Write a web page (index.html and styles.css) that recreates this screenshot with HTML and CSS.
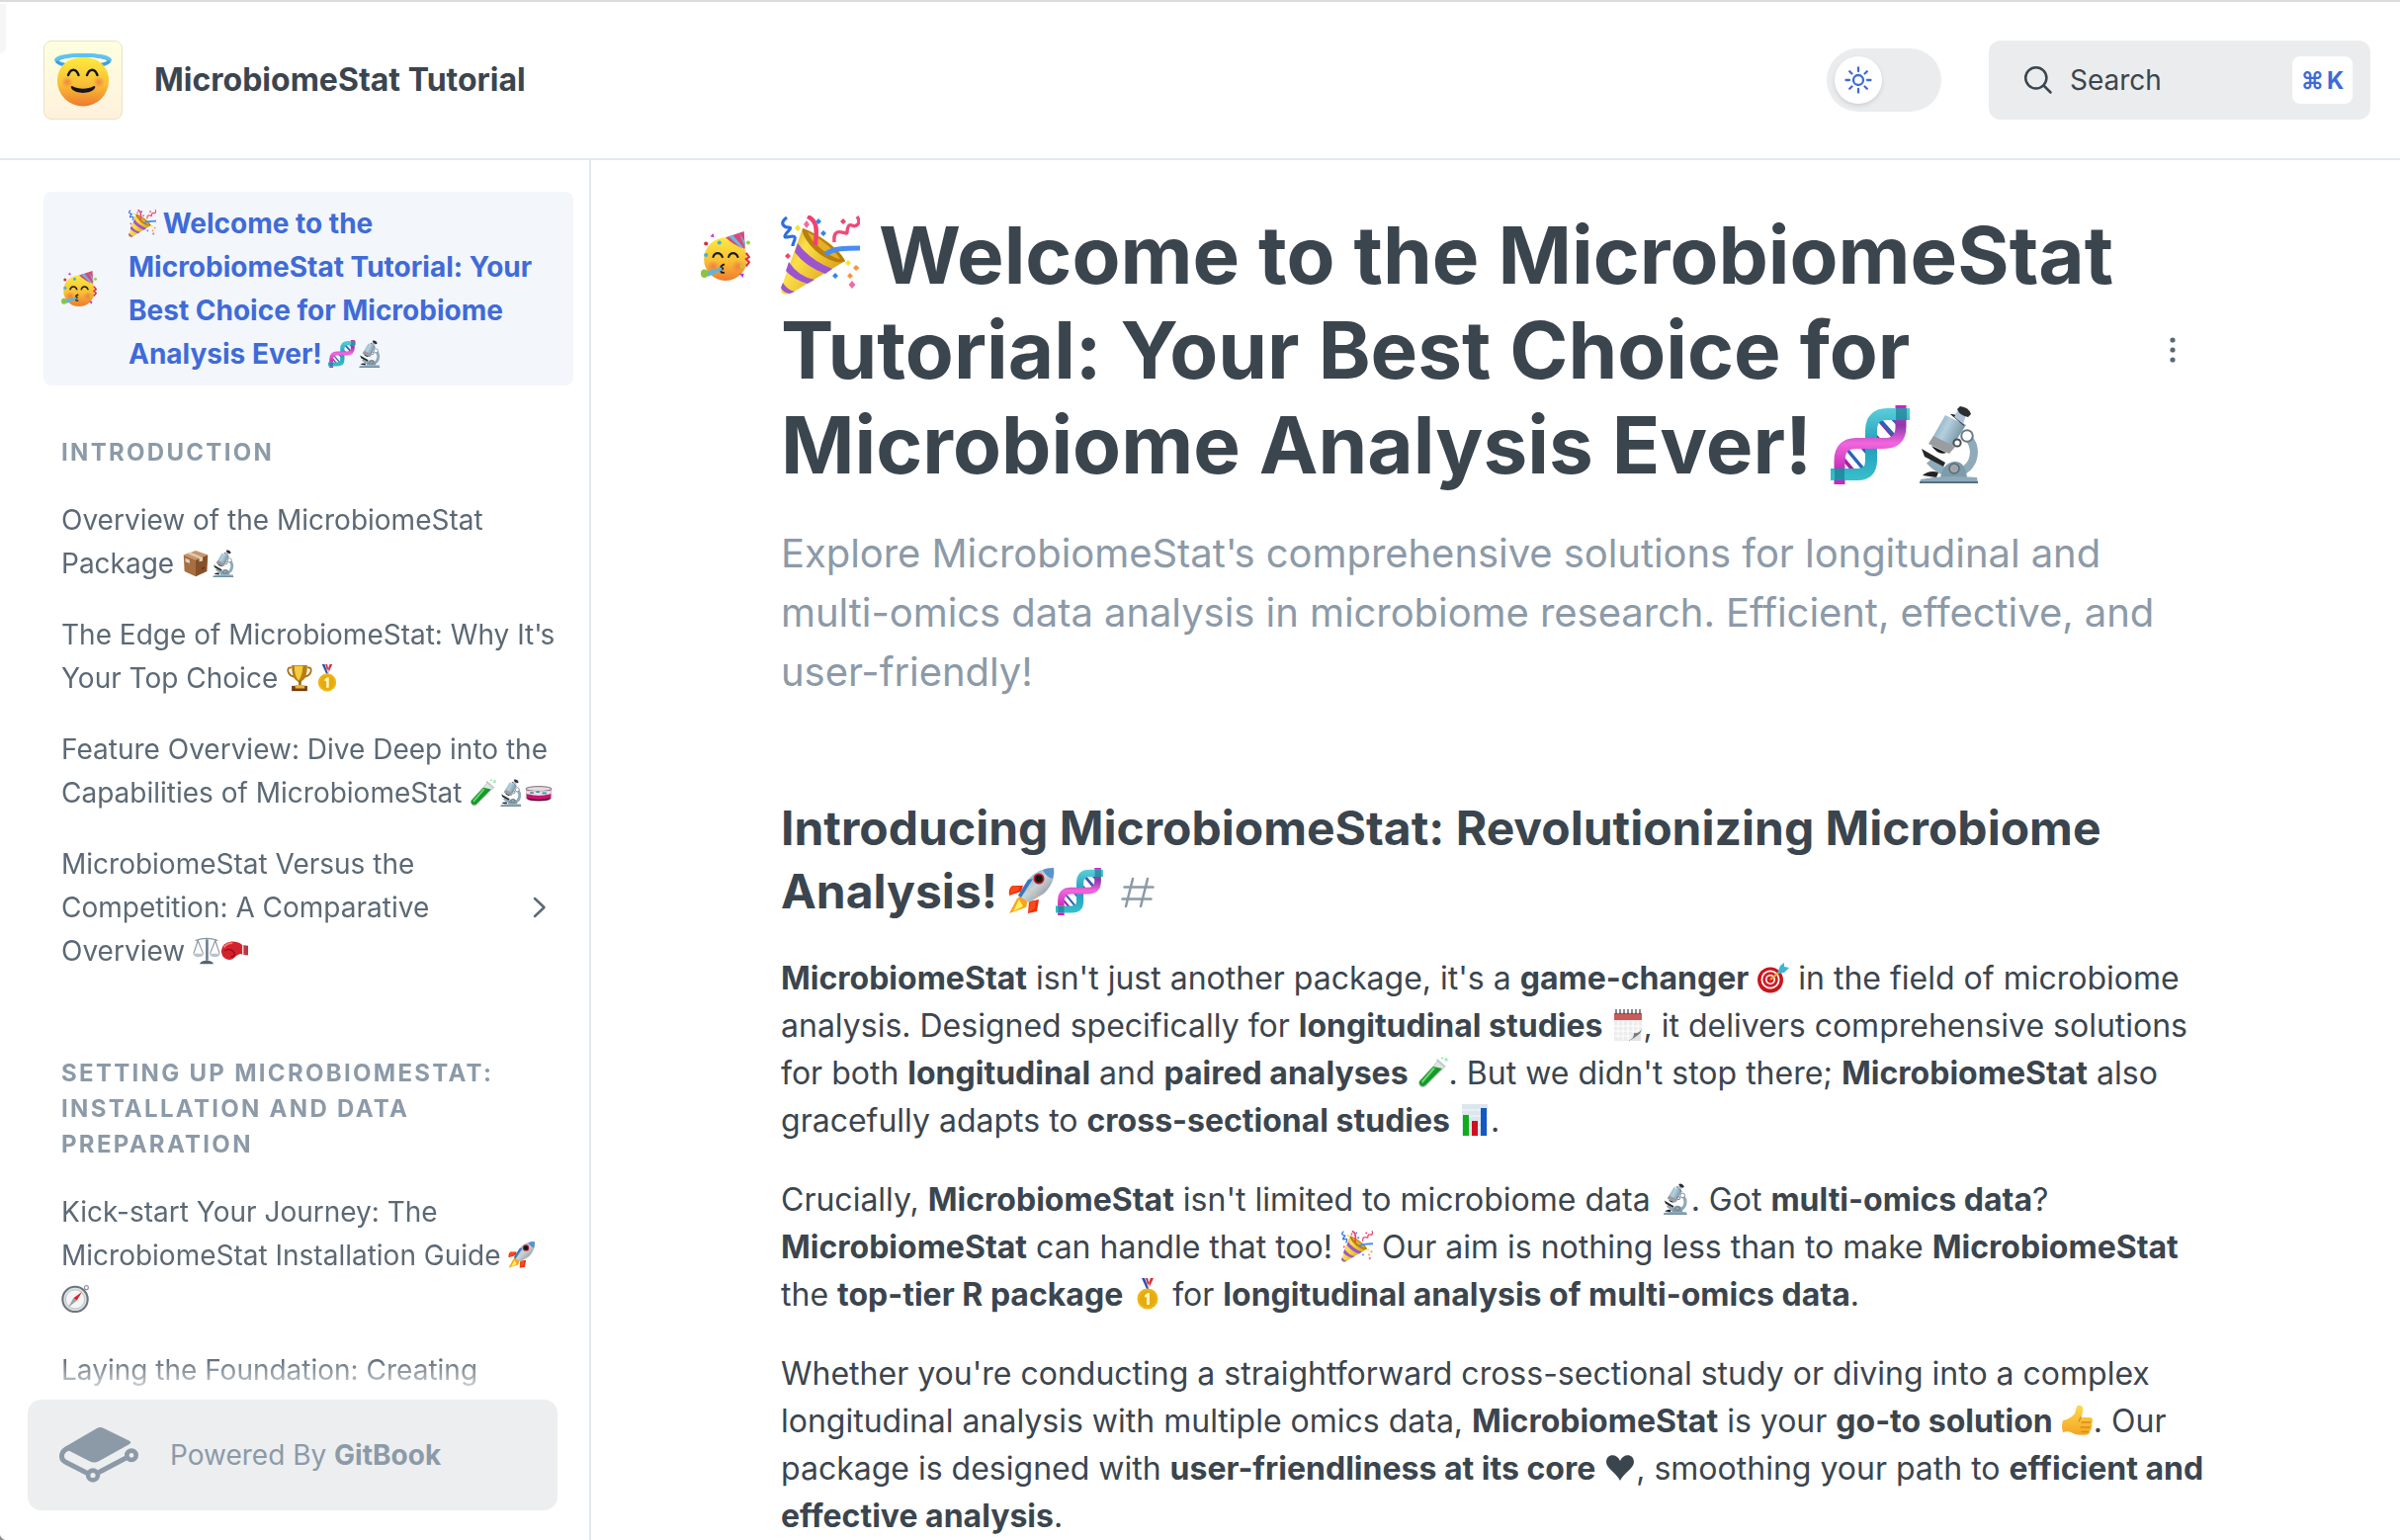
FILE: index.html
```html
<!DOCTYPE html>
<html lang="en">
<head>
<meta charset="utf-8">
<title>MicrobiomeStat Tutorial</title>
<link rel="stylesheet" href="styles.css">
</head>
<body>
<svg class="sprite" width="0" height="0" aria-hidden="true">
  <defs>
    <linearGradient id="face" x1="0" y1="0" x2="0" y2="1"><stop offset="0" stop-color="#fdea3f"/><stop offset=".55" stop-color="#f9bf35"/><stop offset="1" stop-color="#ee7a2e"/></linearGradient>
    <linearGradient id="gold" x1="0" y1="0" x2="1" y2=".6"><stop offset="0" stop-color="#c98f12"/><stop offset=".4" stop-color="#fbe04a"/><stop offset="1" stop-color="#d99a14"/></linearGradient>
    <linearGradient id="steel" x1="0" y1="0" x2="1" y2=".5"><stop offset="0" stop-color="#6d93a8"/><stop offset=".5" stop-color="#b4d0de"/><stop offset="1" stop-color="#6b8899"/></linearGradient>
    <linearGradient id="teal" gradientUnits="userSpaceOnUse" x1="0" y1="0" x2="0" y2="80"><stop offset="0" stop-color="#5fd3dc"/><stop offset=".5" stop-color="#1f9dbb"/><stop offset="1" stop-color="#3cc3cc"/></linearGradient>
    <linearGradient id="magenta" gradientUnits="userSpaceOnUse" x1="0" y1="0" x2="0" y2="80"><stop offset="0" stop-color="#e23bd0"/><stop offset=".25" stop-color="#8d38ad"/><stop offset=".48" stop-color="#f166dd"/><stop offset="1" stop-color="#ad0fa5"/></linearGradient>
    <linearGradient id="hull" x1="0" y1="0" x2="1" y2="1"><stop offset="0" stop-color="#3f87cf"/><stop offset=".5" stop-color="#c9d4dc"/><stop offset="1" stop-color="#6f7478"/></linearGradient>
    <linearGradient id="thumb" x1="0" y1="0" x2="0" y2="1"><stop offset="0" stop-color="#ffd84a"/><stop offset="1" stop-color="#f3a524"/></linearGradient>
    <radialGradient id="blush"><stop offset="0" stop-color="#f0744a" stop-opacity=".8"/><stop offset="1" stop-color="#f0744a" stop-opacity="0"/></radialGradient>
  </defs>

  <symbol id="halo" viewBox="0 0 80 80">
    <ellipse cx="40" cy="20.5" rx="26.5" ry="5.7" fill="none" stroke="#3f9fe4" stroke-width="3.6"/>
    <path d="M40 17c14 0 26 8 26 23.500a26 26 0 0 1-52 0C14 25 26 17 40 17z" fill="url(#face)"/>
    <path d="M12.500 20.500C13.500 13 66.500 13 67.500 20.500" fill="none" stroke="#5bc3f4" stroke-width="3.600"/>
    <circle cx="24" cy="42" r="6" fill="url(#blush)"/><circle cx="56" cy="42" r="6" fill="url(#blush)"/>
    <path d="M25 35c2.500-7 8-7 10.500 0M44 35c2.500-7 8-7 10.500 0" fill="none" stroke="#14151f" stroke-width="2.400" stroke-linecap="round"/>
    <path d="M29 46c6 3.500 16 3.500 22 0 1.500 0 1.500 1 1 2-4 6.500-20 6.500-24 0-.5-1-.5-2 1-2z" fill="#14151f"/>
  </symbol>

  <symbol id="party" viewBox="0 0 48 48">
    <circle cx="24" cy="27" r="21" fill="url(#face)"/>
    <circle cx="12" cy="34" r="6" fill="url(#blush)"/><circle cx="36" cy="34" r="6" fill="url(#blush)"/>
    <path d="M42 0L24 6q8 8 19 11z" fill="#d84a7c"/>
    <path d="M37 1.700l6 8.500v5zM31 3.700L42 16.500l-4-1.500L27 5z" fill="#6db7dd"/>
    <path d="M12 25c1.500-5 7-5 9 0M27 25c1.500-5 7-5 9 0" fill="none" stroke="#1d1a1a" stroke-width="2" stroke-linecap="round"/>
    <path d="M23 32c-5 2-4 4-1 4-4 2-3 5 1 4" fill="none" stroke="#1d1a1a" stroke-width="1.800"/>
    <path d="M4 39l16-4 1 3-14 6z" fill="#62b5d4"/><ellipse cx="3.500" cy="41" rx="3.500" ry="4" fill="#8bc53f"/>
    <path d="M44 21l3 4-3 2 3 3-3 4" fill="none" stroke="#d8304a" stroke-width="2"/>
    <path d="M9 5l3-3 1 4zM37 41h5l-1 4zM4 22h3" fill="#c63be0"/>
    <circle cx="5" cy="12" r="2" fill="#d8303a"/><circle cx="46" cy="11" r="2" fill="#8bd943"/><circle cx="18" cy="11" r="2" fill="#38b6e8"/><circle cx="5" cy="23" r="2" fill="#38b6e8"/><circle cx="40" cy="34" r="2" fill="#c9c23f"/>
  </symbol>

  <symbol id="popper" viewBox="0 0 80 80">
    <path d="M22 13C33 16 57 30 65 46L10 79Q0 82 0 74z" fill="url(#gold)"/>
    <path d="M22 13C32 16 58 32 65 46c-5 4-18-1-27-8S20 18 22 13z" fill="#b97f0e"/>
    <path d="M27 17C38 22 54 34 60 44c-8-1-27-13-33-27z" fill="#e3ae28"/>
    <path d="M17 28Q29 45 52 54L45 59Q24 51 14 37zM8 47Q18 62 34 65L27 69Q13 65 5 56zM2 68Q6 75 14 77L9 79Q2 78 0 73z" fill="#9c55cf"/>
    <path d="M6 2C-2 8 3 12 8 12S4 18 4 21s9-2 10 1-2 5-2 9" fill="none" stroke="#2e6fe0" stroke-width="3.200"/>
    <path d="M27 1C38 6 36 16 35 30" fill="none" stroke="#f0426e" stroke-width="4.500"/>
    <path d="M77 1C82 8 76 12 72 10s-5 4-5 7-6-2-10 0-3 6-3 10" fill="none" stroke="#f04a78" stroke-width="3.400"/>
    <path d="M45 39C54 33 66 33 80 33" fill="none" stroke="#4a8df0" stroke-width="5"/>
    <g fill="#f06aa8"><path d="M26 5l3 4-3 4-3-4zM72 66l3.500 4-3.500 4-3.500-4z"/></g>
    <g fill="#f0426e"><path d="M63 3l3 3-3 3-3-3zM7 38l3 3-3 3-3-3z"/></g>
    <g fill="#2f86ee"><path d="M38 3l3 3-3 3-3-3zM43 15l3 3-3 3-3-3zM55 58l3 3-3 3-3-3z"/></g>
    <g fill="#f8e22e"><path d="M17 9l3 4-3 3-3-3zM68 45l3 3-3 3-3-3z"/></g>
    <g fill="#f7953a"><path d="M76 50l3.500 3-3.500 3-3-3zM70 58l3 3-3 3-3-3z"/></g>
  </symbol>

  <symbol id="dna" viewBox="0 0 80 80">
    <path d="M11 52l16 19M41 46l-9-8M48 14l19 22M40 25l12 13" stroke="#a3229f" stroke-width="3.500"/>
    <path d="M16 44l20 24M28 38l12 14M50 15l18 20M58 9l12 12" stroke="#2c63b8" stroke-width="3.500"/>
    <path d="M0 70H27Q41 70 41 56V26Q41 9 57 9H80" fill="none" stroke="url(#teal)" stroke-width="12"/>
    <path d="M9 64V56Q9 38.500 26 38.500H54Q71 38.500 71 22V15" fill="none" stroke="url(#magenta)" stroke-width="11"/>
    <path d="M9 76v4M71 0v3" stroke="#cf22c4" stroke-width="11"/>
    <path d="M4 64h10v12H4zM66 3h11v12H66z" fill="#14788e" opacity=".65"/>
  </symbol>

  <symbol id="scope" viewBox="0 0 80 80">
    <path d="M57 31C70 42 66 62 52 67M20 56Q27 64 38 68" fill="none" stroke="#8fabb9" stroke-width="8"/>
    <path d="M31 73Q34 58 45 57T58 73z" fill="#7d9bab"/>
    <path d="M36 10L57 20 39 48 20 38z" fill="url(#steel)"/>
    <path d="M24 31L46 42 40 49 19 39z" fill="#9a9ca0"/><path d="M22 41l15 7q-8 3-15-7z" fill="#17191b"/>
    <path d="M41 9Q52 8 55 21z" fill="#1e2224"/>
    <path d="M48 6l9 4-3 9-9-7z" fill="#aec3d8"/><path d="M51 1q9 1 11 8l-3 3q-9-2-11-8z" fill="#2b2e30"/>
    <path d="M12 44l24 14-2 4L15 52z" fill="#26292b"/><path d="M13 71q7-6 16-3l-2 5z" fill="#222"/>
    <circle cx="58" cy="31" r="5.800" fill="#fff" stroke="#697983" stroke-width="2"/><circle cx="48" cy="38" r="3.600" fill="#fff" stroke="#4a4f52" stroke-width="2"/>
    <circle cx="45" cy="64" r="5" fill="#a2a5a7" stroke="#576b76" stroke-width="1.500"/>
    <path d="M11 75q23-5 57-2l1 6H10z" fill="#8eaaba"/><path d="M10 77h59v2H10z" fill="#54717f"/>
  </symbol>

  <symbol id="package" viewBox="0 0 32 32">
    <path d="M16 1L30 6 16 12 2 6z" fill="#c9976a"/><path d="M2 6l14 6v19L3 25z" fill="#a76e3f"/><path d="M30 6L16 12v19l13-6z" fill="#85502a"/>
    <path d="M10 3l14 6v4l-4 1V10L6 4.500z" fill="#e4cdb0"/><path d="M4 10l5 2v4l-5-2z" fill="#d9d2cb"/><path d="M23 21l3-1v2l-3 1z" fill="#5e3415"/>
  </symbol>

  <symbol id="trophy" viewBox="0 0 32 32">
    <path d="M7 4C0 2 1 14 12 15M25 4c7-2 6 10-5 11" fill="none" stroke="#a86f10" stroke-width="2"/>
    <path d="M7 1h18q0 15-6 18l-2 2h-2l-2-2Q7 16 7 1z" fill="#b87c10"/><path d="M10 2h10q-1 12-5 17Q10 14 10 2z" fill="#f4cb3c"/><path d="M15 19h3v6h-3z" fill="#a0670c"/><path d="M7 25h18v6H7z" fill="#7a3a14"/><path d="M11 24h11v4H11z" fill="#e6b637"/>
  </symbol>

  <symbol id="medal" viewBox="0 0 32 32">
    <path d="M10 0h12l-5 12h-2z" fill="#e9edf5"/><path d="M10 0h3l4 11h-2z" fill="#2450b0"/><path d="M14 0h2l2 8-1 3zM22 0h-3l-3 8 1 3z" fill="#d5333c"/>
    <circle cx="16" cy="21" r="10.500" fill="#f0b416"/><circle cx="16" cy="21" r="8" fill="#e4ac10"/><path d="M13 17.500l3-2.500h2v12h-3v-8l-2 .8z" fill="#fff3b5"/>
  </symbol>

  <symbol id="tube" viewBox="0 0 32 32">
    <path d="M21 4l7 6L8 30q-3 2-5 0t-1-5z" fill="#dce7e3" stroke="#aebcb6" stroke-width=".8"/>
    <path d="M16 10l9 2L8 29q-3 2-5 0t-1-4z" fill="#18972a"/><path d="M16 11l2 1L5 27l-1-2z" fill="#6bdc6b"/>
    <path d="M20 2l9 8-2 1-8-7z" fill="#c3ccc8"/><circle cx="29" cy="3" r="1.800" fill="#9cf0b4"/><circle cx="25" cy="1.500" r="1" fill="#7fe39b"/>
  </symbol>

  <symbol id="petri" viewBox="0 0 32 32">
    <path d="M1 11h30v11q0 4-15 4T1 22z" fill="#c9bcc4"/><path d="M2 17q14 4 28 0v5q-2 3-14 3T2 22z" fill="#c8146f"/><path d="M2 22q14 4 28 0-1 3.500-14 3.500T2 22z" fill="#5a0836"/>
    <ellipse cx="16" cy="11.500" rx="15" ry="2.800" fill="#e6dbe1" stroke="#6f5a66" stroke-width="1"/><path d="M2 14h28v3q-14 4-28 0z" fill="#f2d9e6"/><path d="M6 16h4M13 15h4M20 16.500h5" stroke="#22a39c" stroke-width="2"/>
  </symbol>

  <symbol id="scales" viewBox="0 0 32 32">
    <path d="M16 1v28M3 4q13-5 26 0M6 4L1 19M6 4l6 15M26 4l-6 15M26 4l5 15" fill="none" stroke="#8796a5" stroke-width="1.300"/>
    <path d="M0 19h13q-2 4-6.500 4T0 19zM19 19h13q-2 4-6.500 4T19 19z" fill="#b8c4cf"/><path d="M15 3h3v24h-3z" fill="#708090"/><path d="M8 31q1-4 8-4t8 4z" fill="#56636f"/>
  </symbol>

  <symbol id="glove" viewBox="0 0 32 32">
    <path d="M1 16Q2 6 13 5q9 0 12 4v10q-6 1-9 5-4 4-10 1-5-3-5-9z" fill="#d3222b"/><path d="M4 12q3-5 10-5" fill="none" stroke="#ff7a78" stroke-width="2"/><path d="M5 16q6-4 10 1t-3 6" fill="none" stroke="#8c0d15" stroke-width="1.400"/><path d="M24 9l8 1v11l-8-1z" fill="#c2333b"/><path d="M26 9.500v11" stroke="#eee" stroke-width="1.500"/>
  </symbol>

  <symbol id="rocket" viewBox="0 0 48 48">
    <path d="M15 18L4 18q-4 3-3 10l12-4zM31 32l-2 12-9 2 1-12z" fill="#f02c0c"/><path d="M4 18l8 1-2 4-9 4zM28 33l-1 8-6 4 1-10z" fill="#ff6a2a" opacity=".5"/>
    <path d="M9 31L1 46l17-6 2-8-7-4z" fill="#f7a51c"/><path d="M11 32L5 44l10-5z" fill="#ffef5e"/>
    <path d="M46 0Q30 0 20 12L10 28l11 7L36 26Q48 15 46 0z" fill="url(#hull)"/><path d="M46 0q-7 0-11 2 3 7 10 9 2-6 1-11z" fill="#5b93ca"/>
    <path d="M20 12L10 28l3 2L25 11z" fill="#3978b8"/><path d="M19 21l10 8" stroke="#e7c36a" stroke-width="1"/>
    <circle cx="31" cy="11" r="5.500" fill="#c51b1d"/><circle cx="31" cy="11" r="3.800" fill="#14181c"/>
  </symbol>

  <symbol id="compass" viewBox="0 0 32 32">
    <circle cx="29" cy="3" r="2.300" fill="none" stroke="#8a9299" stroke-width="1.200"/><circle cx="16" cy="16.500" r="14.500" fill="#dfe2e4" stroke="#6c757d" stroke-width="2.400"/><circle cx="16" cy="16.500" r="11" fill="#f4f5f5" stroke="#b5bbc0"/>
    <path d="M24 8l-6 10-4-3z" fill="#e0202b"/><path d="M8 26l6-11 4 3z" fill="#9aa1a7"/>
  </symbol>

  <symbol id="dart" viewBox="0 0 32 32">
    <circle cx="13" cy="18.500" r="13" fill="#c9161d"/><circle cx="13" cy="18" r="9.500" fill="#fff"/><circle cx="13" cy="18" r="7.800" fill="#d11d24"/><circle cx="13" cy="18" r="5" fill="#fff"/><circle cx="13" cy="18" r="3.400" fill="#d11d24"/>
    <path d="M13 18L25 8" stroke="#e4b23a" stroke-width="2"/><path d="M20 12l3-8 4-3v4l5 1-5 5z" fill="#3fb6cf"/>
  </symbol>

  <symbol id="calendar" viewBox="0 0 32 32">
    <path d="M2 3h28v19q-3 9-14 10H2z" fill="#ececec"/><path d="M2 4h28v7H2z" fill="#c95a59"/><path d="M6 12v18M11 12v19M16 12v19M21 12v12M26 12v10M2 17h27M2 22h26M2 27h17" stroke="#fff" stroke-width="1"/>
    <path d="M30 20q-2 9-14 12 7-3 6-8 5 1 8-4z" fill="#77797b"/><path d="M29 24v8H18z" fill="#e3e3e3"/><path d="M4 0v5M8 0v5M12 0v5M16 0v5M20 0v5M24 0v5M28 0v5" stroke="#3c4043" stroke-width="1.200"/>
  </symbol>

  <symbol id="chart" viewBox="0 0 32 32">
    <path d="M3 0h26v32H3z" fill="#dce6ee"/><path d="M3 6h26M3 12h26M3 18h26M3 24h26" stroke="#f5f8fa" stroke-width="1"/><path d="M4 11h6v21H4z" fill="#10ac1c"/><path d="M13 17h6v15h-6z" fill="#cf1020"/><path d="M22 4h6v28h-6z" fill="#1458c4"/>
  </symbol>

  <symbol id="thumbs" viewBox="0 0 32 32">
    <path d="M1 16Q8 15 13 9l2-7q1-2 4-1t2 5l-1 7h8q3 0 3 3 0 2-1 3 1 2 0 4 0 2-1.500 3.500Q28 30 25 30.500q-8 1-13-1Q7 26 1 28-1 22 1 16z" fill="url(#thumb)"/>
    <path d="M19 13l-2 4M20 18h9M19 23h9M20 27.500h6" stroke="#d88a1b" stroke-width="1.300" stroke-linecap="round"/>
  </symbol>

  <symbol id="heart" viewBox="0 0 32 32">
    <path d="M16 29C13 22 2 16 2 10.500 2 1 13 1 16 9c3-8 14-8 14 1.500C30 16 19 22 16 29z" fill="currentColor"/>
  </symbol>
</svg>

<div class="page">
  <header class="topbar">
    <div class="brand">
      <div class="brand-tile"><svg class="brand-emoji"><use href="#halo"/></svg></div>
      <span class="brand-name">MicrobiomeStat Tutorial</span>
    </div>
    <div class="tools">
      <div class="toggle">
        <div class="knob">
          <svg width="28" height="32" viewBox="0 0 28 28" fill="none" stroke="#3f6bd8" stroke-width="2.300" stroke-linecap="round"><circle cx="14" cy="14" r="5"/><path d="M14 1.500v3.500M14 23v3.500M1.500 14H5M23 14h3.500M5.200 5.200l2.300 2.300M20.500 20.500l2.300 2.300M5.200 22.800l2.300-2.300M20.500 7.500l2.300-2.300"/></svg>
        </div>
      </div>
      <div class="search">
        <svg width="30" height="30" viewBox="0 0 30 30" fill="none" stroke="#3b454e" stroke-width="2.500" stroke-linecap="round"><circle cx="12.800" cy="12.800" r="10.600"/><path d="M20.500 20.500l7 7"/></svg>
        <span class="search-label">Search</span>
        <span class="keys"><span>⌘</span><span>K</span></span>
      </div>
    </div>
  </header>

  <div class="columns">
    <aside class="sidebar">
      <nav class="nav">
        <a class="active">
          <svg class="active-icon"><use href="#party"/></svg>
          <span><svg class="e"><use href="#popper"/></svg> Welcome to the<br>MicrobiomeStat Tutorial: Your<br>Best Choice for Microbiome<br>Analysis Ever! <svg class="e"><use href="#dna"/></svg><svg class="e"><use href="#scope"/></svg></span>
        </a>
        <h3 class="group">Introduction</h3>
        <a class="item">Overview of the MicrobiomeStat<br>Package <svg class="e"><use href="#package"/></svg><svg class="e"><use href="#scope"/></svg></a>
        <a class="item">The Edge of MicrobiomeStat: Why It<span class="apos">'</span>s<br>Your Top Choice <svg class="e"><use href="#trophy"/></svg><svg class="e"><use href="#medal"/></svg></a>
        <a class="item">Feature Overview: Dive Deep into the<br>Capabilities of MicrobiomeStat <svg class="e"><use href="#tube"/></svg><svg class="e"><use href="#scope"/></svg><svg class="e"><use href="#petri"/></svg></a>
        <a class="item item-parent"><span>MicrobiomeStat Versus the<br>Competition: A Comparative<br>Overview <svg class="e"><use href="#scales"/></svg><svg class="e"><use href="#glove"/></svg></span>
          <svg width="14" height="22" viewBox="0 0 14 22" fill="none" stroke="#5c6975" stroke-width="2.500" stroke-linecap="round" stroke-linejoin="round"><path d="M2 2l9.500 9L2 20"/></svg>
        </a>
        <h3 class="group group-next">Setting up MicrobiomeStat:<br>Installation and Data<br>Preparation</h3>
        <a class="item">Kick-start Your Journey: The<br>MicrobiomeStat Installation Guide <svg class="e"><use href="#rocket"/></svg><br><svg class="e"><use href="#compass"/></svg></a>
        <a class="item">Laying the Foundation: Creating</a>
      </nav>
      <div class="badge-wrap">
        <div class="badge">
          <svg width="80" height="56" viewBox="0 0 80 56" fill="#8c9aa8">
            <path d="M38 1Q41.500-.8 45 1L71 13.800Q73.500 15.300 71 16.900L40 34.200Q35.500 36.500 31 34.500L10 23.800 4.500 20.500Z"/>
            <path d="M10 21C.5 23.500.5 32.500 7 35.500L28.500 46.500M40 45.500L67.500 31" fill="none" stroke="#8c9aa8" stroke-width="5"/>
            <circle cx="34" cy="48.500" r="4.900" fill="none" stroke="#8c9aa8" stroke-width="4.600"/><circle cx="73" cy="28.300" r="4.700" fill="none" stroke="#8c9aa8" stroke-width="4.600"/>
          </svg>
          <span>Powered By <b>GitBook</b></span>
        </div>
      </div>
    </aside>

    <main class="content">
      <div class="title-row">
        <svg class="title-icon"><use href="#party"/></svg>
        <h1><svg class="e"><use href="#popper"/></svg> Welcome to the MicrobiomeStat<br>Tutorial: Your Best Choice for<br>Microbiome Analysis Ever! <svg class="e"><use href="#dna"/></svg><svg class="e"><use href="#scope"/></svg></h1>
        <svg class="kebab" width="6" height="26" viewBox="0 0 6 26" fill="#5c6975"><circle cx="3" cy="3" r="2.600"/><circle cx="3" cy="13" r="2.600"/><circle cx="3" cy="23" r="2.600"/></svg>
      </div>
      <div class="article">
        <p class="lead">Explore MicrobiomeStat<span class="apos">'</span>s comprehensive solutions for longitudinal and<br>multi-omics data analysis in microbiome research. Efficient, effective, and<br>user-friendly!</p>
        <h2>Introducing MicrobiomeStat: Revolutionizing Microbiome<br>Analysis! <svg class="e"><use href="#rocket"/></svg><svg class="e"><use href="#dna"/></svg><svg class="hash" width="34" height="32" viewBox="0 0 34 32" fill="none" stroke="#8c9aa8" stroke-width="2.500" stroke-linecap="round"><path d="M12 2L5 30M27 2L20 30M3.500 10.500h29M1.500 22.500h29"/></svg></h2>
        <p><b>MicrobiomeStat</b> isn't just another package, it's a <b>game-changer</b> <svg class="e"><use href="#dart"/></svg> in the field of microbiome<br>analysis. Designed specifically for <b>longitudinal studies</b> <svg class="e"><use href="#calendar"/></svg>, it delivers comprehensive solutions<br>for both <b>longitudinal</b> and <b>paired analyses</b> <svg class="e"><use href="#tube"/></svg>. But we didn't stop there; <b>MicrobiomeStat</b> also<br>gracefully adapts to <b>cross-sectional studies</b> <svg class="e"><use href="#chart"/></svg>.</p>
        <p>Crucially, <b>MicrobiomeStat</b> isn't limited to microbiome data <svg class="e"><use href="#scope"/></svg>. Got <b>multi-omics data</b>?<br><b>MicrobiomeStat</b> can handle that too! <svg class="e"><use href="#popper"/></svg> Our aim is nothing less than to make <b>MicrobiomeStat</b><br>the <b>top-tier R package</b> <svg class="e"><use href="#medal"/></svg> for <b>longitudinal analysis of multi-omics data</b>.</p>
        <p>Whether you're conducting a straightforward cross-sectional study or diving into a complex<br>longitudinal analysis with multiple omics data, <b>MicrobiomeStat</b> is your <b>go-to solution</b> <svg class="e"><use href="#thumbs"/></svg>. Our<br>package is designed with <b>user-friendliness at its core</b> <svg class="e"><use href="#heart"/></svg>, smoothing your path to <b>efficient and</b><br><b>effective analysis</b>.</p>
      </div>
    </main>
  </div>
  <div class="edge-tab"></div>
  <div class="corner"></div>
</div>
</body>
</html>
```
FILE: styles.css
```css
* { box-sizing: border-box; }

body {
  margin: 0;
  background: #fff;
  color: #3b454e;
  font-family: Inter, "Liberation Sans", sans-serif;
  white-space: nowrap;
}

.sprite { position: absolute; }

.page {
  position: relative;
  display: flex;
  flex-direction: column;
  width: 2428px;
  height: 1558px;
  overflow: hidden;
}

.e {
  display: inline-block;
  width: 1em;
  height: 1em;
  vertical-align: -0.136em;
  overflow: hidden;
}

.apos { letter-spacing: -0.08em; }

/* Top bar */
.topbar {
  flex: none;
  display: flex;
  align-items: center;
  justify-content: space-between;
  height: 162px;
  padding: 0 30px 0 44px;
  border-top: 2px solid #dcdcdc;
  border-bottom: 2px solid #e3e8ed;
}

.brand { display: flex; align-items: center; gap: 32px; }

.brand-tile {
  width: 80px;
  height: 80px;
  border: 1px solid #e9e2c4;
  border-radius: 8px;
  background: linear-gradient(#fdffdf, #fff1dd);
}

.brand-emoji { display: block; width: 80px; height: 80px; margin: -1px; }
.brand-name { font-size: 32px; font-weight: 700; line-height: 48px; }

.tools { display: flex; align-items: center; gap: 48px; }

.toggle {
  width: 116px;
  height: 64px;
  padding: 8px;
  border-radius: 32px;
  background: #ebeced;
}

.knob {
  display: flex;
  align-items: center;
  justify-content: center;
  width: 48px;
  height: 48px;
  border-radius: 50%;
  background: #fff;
  box-shadow: 0 2px 4px rgba(0, 0, 0, 0.12);
}

.search {
  display: flex;
  align-items: center;
  width: 386px;
  height: 80px;
  padding: 0 18px 0 35px;
  border-radius: 12px;
  background: #ebeced;
}

.search-label { flex: 1; margin-left: 17px; font-size: 28px; }

.keys {
  display: flex;
  align-items: center;
  justify-content: center;
  gap: 3px;
  width: 61px;
  height: 48px;
  border-radius: 8px;
  background: #fff;
  color: #3f6bd8;
  font-size: 24px;
  font-weight: 700;
}

/* Sidebar */
.columns { flex: 1; display: flex; min-height: 0; }

.sidebar {
  flex: none;
  display: flex;
  flex-direction: column;
  width: 598px;
  padding-top: 32px;
  border-right: 2px solid #e3e8ed;
}

.nav {
  flex: none;
  height: 1222px;
  padding-left: 44px;
  overflow: hidden;
  color: #5c6975;
  font-size: 28px;
  line-height: 44px;
  -webkit-mask-image: linear-gradient(#000 1180px, transparent 1222px);
  mask-image: linear-gradient(#000 1180px, transparent 1222px);
}

.active {
  display: flex;
  align-items: center;
  gap: 32px;
  width: 536px;
  height: 196px;
  padding: 10px 18px;
  border-radius: 8px;
  background: #f3f6fb;
  color: #3f6bd8;
  font-weight: 700;
}

.active-icon { flex: none; width: 36px; height: 36px; }

.group {
  margin: 50px 0 28px;
  padding-left: 18px;
  color: #8c9aa8;
  font-size: 24px;
  font-weight: 700;
  line-height: 36px;
  letter-spacing: 2.3px;
  text-transform: uppercase;
}

.group-next { margin-top: 84px; }

.item { display: block; margin-bottom: 28px; padding-left: 18px; }

.item-parent {
  display: flex;
  align-items: center;
  justify-content: space-between;
  padding-right: 43px;
}

.badge-wrap { padding-left: 28px; }

.badge {
  display: flex;
  align-items: center;
  gap: 32px;
  width: 536px;
  height: 112px;
  padding: 0 32px;
  border-radius: 14px;
  background: #edeef0;
  color: #8c9aa8;
  font-size: 28px;
}

.badge b { font-weight: 700; }

/* Article */
.content { flex: 1; padding: 48px 0 0 111px; }

.title-row { display: flex; }
.title-icon { flex: none; width: 50px; height: 50px; margin: 24px 31px 0 0; }

h1 {
  width: 1405px;
  margin: 0;
  font-size: 80px;
  font-weight: 700;
  line-height: 96px;
}

.kebab { align-self: center; }

.article { padding-left: 81px; }

.lead {
  margin: 32px 0 96px;
  color: #8c9aa8;
  font-size: 40px;
  line-height: 60px;
  letter-spacing: -0.06px;
}

h2 {
  margin: 0 0 32px;
  font-size: 48px;
  font-weight: 700;
  line-height: 64px;
}

.hash { margin-left: 18px; }

.article p:not(.lead) {
  margin: 0 0 32px;
  font-size: 32px;
  line-height: 48px;
}

.article b { font-weight: 700; }

/* Window edges */
.edge-tab {
  position: absolute;
  top: 4px;
  left: 0;
  width: 6px;
  height: 50px;
  border-radius: 0 0 6px 0;
  background: #f6f6f6;
}

.corner {
  position: absolute;
  bottom: 0;
  left: 0;
  width: 8px;
  height: 8px;
  background: radial-gradient(circle at 100% 0, transparent 8px, #8c8c8c 9px);
}
```
